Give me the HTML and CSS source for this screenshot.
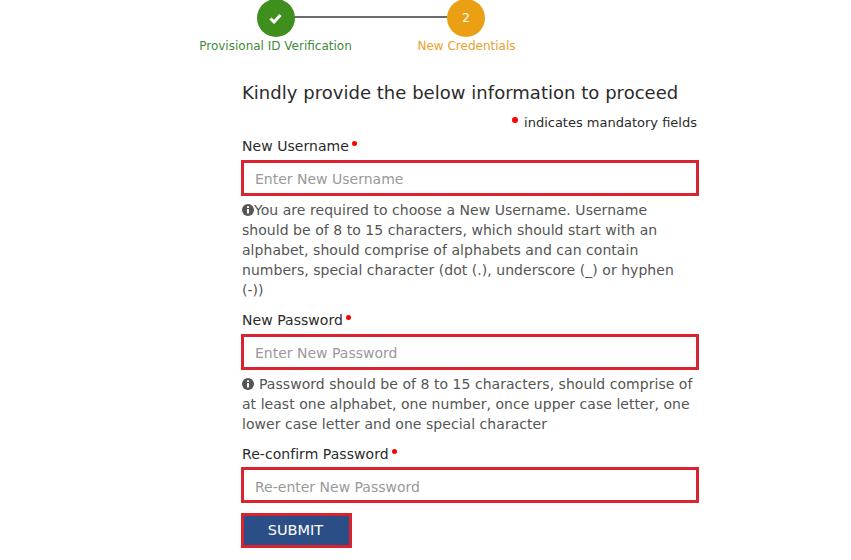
FILE: index.html
```html
<!DOCTYPE html>
<html lang="en">
<head>
    <meta charset="UTF-8">
    <meta name="viewport" content="width=device-width, initial-scale=1.0">
    <title>New Credentials</title>
    <link rel="stylesheet" href="styles.css">
</head>
<body>
    <div class="stepper">
        <div class="step done">
            <div class="circle">
                <svg width="13" height="11" viewBox="0 0 13 11"><path d="M1.5 5.5 L5 9 L11.5 2" fill="none" stroke="#ffffff" stroke-width="3"/></svg>
            </div>
            <div class="step-label">Provisional ID Verification</div>
        </div>
        <div class="line"></div>
        <div class="step active">
            <div class="circle">2</div>
            <div class="step-label">New Credentials</div>
        </div>
    </div>

    <form class="form">
        <h1>Kindly provide the below information to proceed</h1>
        <p class="legend"><span class="dot"></span>indicates mandatory fields</p>

        <label for="username">New Username<span class="dot"></span></label>
        <input type="text" id="username" placeholder="Enter New Username">
        <p class="hint narrow"><svg class="info" width="12" height="12" viewBox="0 0 12 12"><circle cx="6" cy="6" r="6" fill="#555555"/><rect x="5" y="5" width="2" height="4.5" fill="#ffffff"/><rect x="5" y="2.2" width="2" height="1.8" fill="#ffffff"/></svg>You are required to choose a New Username. Username should be of 8 to 15 characters, which should start with an alphabet, should comprise of alphabets and can contain numbers, special character (dot (.), underscore (_) or hyphen (-))</p>

        <label for="password">New Password<span class="dot"></span></label>
        <input type="password" id="password" placeholder="Enter New Password">
        <p class="hint"><svg class="info spaced" width="12" height="12" viewBox="0 0 12 12"><circle cx="6" cy="6" r="6" fill="#555555"/><rect x="5" y="5" width="2" height="4.5" fill="#ffffff"/><rect x="5" y="2.2" width="2" height="1.8" fill="#ffffff"/></svg>Password should be of 8 to 15 characters, should comprise of at least one alphabet, one number, once upper case letter, one lower case letter and one special character</p>

        <label for="confirm">Re-confirm Password<span class="dot"></span></label>
        <input type="password" id="confirm" class="last" placeholder="Re-enter New Password">

        <button type="button" class="submit">SUBMIT</button>
    </form>
</body>
</html>
```

FILE: styles.css
```css
* {
    margin: 0;
    padding: 0;
    box-sizing: border-box;
    font-family: "DejaVu Sans", Verdana, sans-serif;
}

html, body {
    height: 560px;
    overflow: hidden;
}

body {
    background: #ffffff;
    color: #333333;
}

.stepper {
    display: flex;
    align-items: flex-start;
    width: 285px;
    height: 56px;
    margin-left: 228px;
    margin-top: -1px;
}

.step {
    display: flex;
    flex-direction: column;
    align-items: center;
    width: 95px;
}

.circle {
    display: flex;
    justify-content: center;
    align-items: center;
    flex: none;
    width: 38px;
    height: 38px;
    border-radius: 50%;
    color: #ffffff;
    font-size: 12px;
}

.step-label {
    margin-top: 1px;
    font-size: 12px;
    line-height: 16px;
    white-space: nowrap;
}

.done .circle {
    background: #3f8f1f;
}

.done .step-label {
    color: #3f8a3a;
}

.active .circle {
    background: #eb9f12;
    padding-left: 1px;
}

.active .step-label {
    margin-left: 2px;
    color: #eba02c;
}

.line {
    flex: none;
    width: 153px;
    height: 2px;
    margin: 17px -29px 0;
    background: #6b6b6b;
}

.form {
    display: flex;
    flex-direction: column;
    width: 458px;
    margin-left: 241px;
    padding-top: 26px;
}

h1 {
    padding-left: 1px;
    font-size: 18px;
    font-weight: 400;
    line-height: 24px;
    letter-spacing: 0.03px;
    color: #2b2b2b;
}

.legend {
    margin-top: 10px;
    padding-right: 2px;
    text-align: right;
    font-size: 13px;
    line-height: 16px;
    color: #2b2b2b;
}

.dot {
    display: inline-block;
    width: 6px;
    height: 6px;
    margin: 0 6px 4px 0;
    border-radius: 50%;
    background: #ff0000;
}

label {
    margin-top: 6px;
    padding-left: 1px;
    font-size: 14px;
    line-height: 18px;
    letter-spacing: 0.05px;
    color: #2b2b2b;
}

label .dot {
    width: 5px;
    height: 5px;
    margin: 0 0 5px 3px;
}

input {
    width: 100%;
    height: 36px;
    margin-top: 5px;
    padding: 1px 11px 0;
    border: 3px solid #d9232e;
    outline: none;
    font-size: 14px;
    color: #333333;
}

input::placeholder {
    color: #999999;
    opacity: 1;
}

input.last {
    margin-top: 4px;
    padding-top: 3px;
}

.hint {
    margin-top: 4px;
    padding-left: 1px;
    font-size: 14px;
    line-height: 20px;
    letter-spacing: 0.04px;
    color: #555555;
}

.narrow {
    padding-right: 14px;
}

.info {
    vertical-align: -1px;
}

.spaced {
    margin-right: 5px;
}

.hint + label {
    margin-top: 11px;
}

.submit {
    width: 111px;
    height: 35px;
    margin-top: 10px;
    padding: 0 2px 2px 0;
    border: 3px solid #d9232e;
    background: #2c4e86;
    color: #ffffff;
    font-size: 14.5px;
}
```
